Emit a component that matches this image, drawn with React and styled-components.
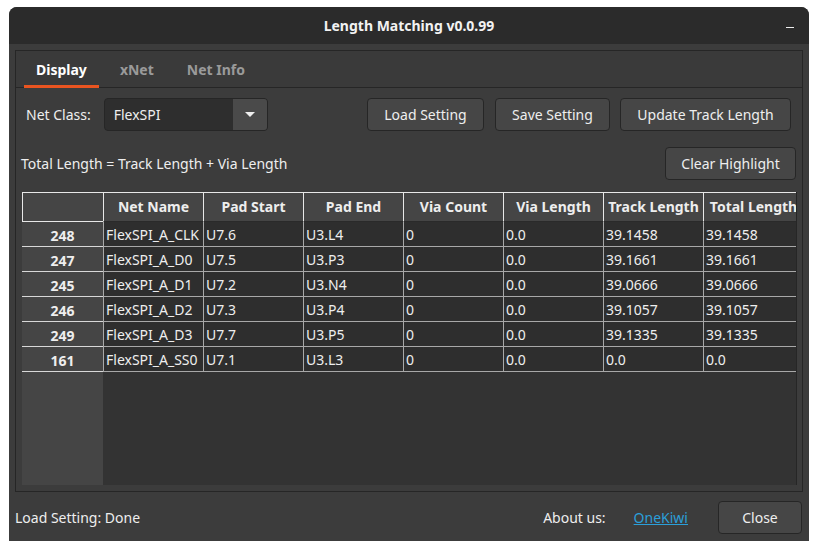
import React from "react"
import styled, { createGlobalStyle } from 'styled-components';

const orange = "#e95420";
const link = "#2b9fd9";
const text = "#eeeeee";
const font = "'Noto Sans', 'DejaVu Sans', sans-serif";

const GlobalStyle = createGlobalStyle`
  body {
    margin: 0;
    background: #ffffff;
    font-family: ${font};
  }
`;

const Window = styled.div`
  margin: 7px 0 0 9px;
  width: 800px;
  height: 534px;
  border-radius: 8px 8px 0 0;
  overflow: hidden;
  background: #3c3c3c;
  display: flex;
  flex-direction: column;
  color: ${text};
  font-size: 14px;
`;

const TitleBar = styled.div`
  height: 37px;
  flex: none;
  background: #2b2b2b;
  display: grid;
  grid-template-columns: 1fr auto 1fr;
  align-items: center;
  font-weight: bold;
  font-size: 14px;
  color: #f2f2f2;
`;

const Minimize = styled.span`
  justify-self: end;
  width: 8px;
  height: 1.5px;
  background: #eeeeee;
  margin: 4px 15px 0 0;
`;

const Body = styled.div`
  flex: 1;
  display: flex;
  flex-direction: column;
  padding: 6px 6px 0 6px;
  min-height: 0;
`;

const TabWidget = styled.div`
  height: 440px;
  flex: none;
  display: flex;
  flex-direction: column;
  border: 1px solid #262626;
  background: #3a3a3a;
`;

const TabBar = styled.div`
  height: 36px;
  flex: none;
  display: flex;
  gap: 9px;
  padding-left: 8px;
  border-bottom: 1px solid #262626;
`;

const Tab = styled.div`
  padding: 0 12px;
  display: flex;
  align-items: center;
  font-weight: bold;
  color: ${p => p.$active ? "#ffffff" : "#9a9a9a"};
  box-shadow: ${p => p.$active ? `inset 0 -3px 0 ${orange}` : "none"};
  margin-bottom: -1px;
  padding-bottom: 1px;
`;

const Panel = styled.div`
  flex: 1;
  background: #3c3c3c;
  padding: 10px 5px 4px 6px;
  display: flex;
  flex-direction: column;
  min-height: 0;
`;

const Toolbar = styled.div`
  display: flex;
  align-items: center;
  height: 33px;
  padding-left: 4px;
`;

const Label = styled.span`
  margin-right: 13px;
`;

const Combo = styled.div`
  width: 164px;
  height: 33px;
  box-sizing: border-box;
  display: flex;
  border: 1px solid #262626;
  border-radius: 4px;
  overflow: hidden;
  background: #2e2e2e;
`;

const ComboText = styled.div`
  flex: 1;
  display: flex;
  align-items: center;
  padding-left: 9px;
`;

const ComboArrow = styled.div`
  width: 34px;
  background: #4a4a4a;
  display: flex;
  align-items: center;
  justify-content: center;

  &::after {
    content: "";
    border-left: 5px solid transparent;
    border-right: 5px solid transparent;
    border-top: 5px solid #eeeeee;
  }
`;

const Spacer = styled.div`
  flex: 1;
`;

const Button = styled.button`
  height: 33px;
  width: ${p => p.$w}px;
  margin-left: ${p => p.$ml || 0}px;
  box-sizing: border-box;
  background: #464646;
  border: 1px solid #262626;
  border-radius: 4px;
  color: ${text};
  font-family: ${font};
  font-size: 14px;
  padding: 0;
`;

const InfoRow = styled.div`
  display: flex;
  align-items: center;
  height: 33px;
  margin-top: 16px;
  padding-right: 1px;
`;

const Formula = styled.span`
  margin-left: -1px;
`;

const Table = styled.div`
  margin-top: 12px;
  height: 293px;
  width: 775px;
  display: flex;
  overflow: hidden;
  background: #333333;
  border-right: 1px solid #262626;
  box-sizing: border-box;
`;

const RowHeaders = styled.div`
  width: 81px;
  flex: none;
  background: #454545;
  display: flex;
  flex-direction: column;
`;

const Corner = styled.div`
  height: 30px;
  box-sizing: border-box;
  border: 1px solid #e8e8e8;
  border-right: none;
`;

const RowNum = styled.div`
  height: 25px;
  box-sizing: border-box;
  border-bottom: 1px solid #d8d8d8;
  display: flex;
  align-items: center;
  justify-content: center;
  font-weight: bold;
  padding-top: 2px;
`;

const Grid = styled.div`
  display: grid;
  grid-template-columns: repeat(7, 100px);
  grid-auto-rows: 25px;
  grid-template-rows: 30px;
  align-content: start;
`;

const HeadCell = styled.div`
  background: #454545;
  box-sizing: border-box;
  border-top: 1px solid #e8e8e8;
  border-left: 1px solid #e8e8e8;
  border-bottom: 1px solid #2a2a2a;
  display: flex;
  align-items: center;
  justify-content: center;
  font-weight: bold;
  white-space: nowrap;
  overflow: hidden;
  padding-bottom: 1px;
`;

const Cell = styled.div`
  background: #2e2e2e;
  box-sizing: border-box;
  border-left: 1px solid #a8a8a8;
  border-bottom: 1px solid #a8a8a8;
  display: flex;
  align-items: center;
  padding-left: 2px;
  white-space: nowrap;
  overflow: hidden;
`;

const Footer = styled.div`
  flex: 1;
  display: flex;
  align-items: center;
  padding: 1px 1px 0 0;
`;

const LinkText = styled.a`
  color: ${link};
  text-decoration: underline;
  margin: 0 30px 0 28px;
`;

const columns = ["Net Name", "Pad Start", "Pad End", "Via Count", "Via Length", "Track Length", "Total Length"];

const rows = [
  ["248", "FlexSPI_A_CLK", "U7.6", "U3.L4", "0", "0.0", "39.1458", "39.1458"],
  ["247", "FlexSPI_A_D0", "U7.5", "U3.P3", "0", "0.0", "39.1661", "39.1661"],
  ["245", "FlexSPI_A_D1", "U7.2", "U3.N4", "0", "0.0", "39.0666", "39.0666"],
  ["246", "FlexSPI_A_D2", "U7.3", "U3.P4", "0", "0.0", "39.1057", "39.1057"],
  ["249", "FlexSPI_A_D3", "U7.7", "U3.P5", "0", "0.0", "39.1335", "39.1335"],
  ["161", "FlexSPI_A_SS0", "U7.1", "U3.L3", "0", "0.0", "0.0", "0.0"],
];

const App = () => (
  <>
    <GlobalStyle />
    <Window>
      <TitleBar>
        <span />
        <span>Length Matching v0.0.99</span>
        <Minimize />
      </TitleBar>

      <Body>
        <TabWidget>
          <TabBar>
            <Tab $active>Display</Tab>
            <Tab>xNet</Tab>
            <Tab>Net Info</Tab>
          </TabBar>

          <Panel>
            <Toolbar>
              <Label>Net Class:</Label>
              <Combo>
                <ComboText>FlexSPI</ComboText>
                <ComboArrow />
              </Combo>
              <Spacer />
              <Button $w={117}>Load Setting</Button>
              <Button $w={115} $ml={11}>Save Setting</Button>
              <Button $w={171} $ml={10}>Update Track Length</Button>
              <span style={{ width: 6 }} />
            </Toolbar>

            <InfoRow>
              <Formula>Total Length = Track Length + Via Length</Formula>
              <Spacer />
              <Button $w={131}>Clear Highlight</Button>
            </InfoRow>

            <Table>
              <RowHeaders>
                <Corner />
                {rows.map(r => <RowNum key={r[0]}>{r[0]}</RowNum>)}
              </RowHeaders>
              <Grid>
                {columns.map(c => <HeadCell key={c}>{c}</HeadCell>)}
                {rows.map(r => r.slice(1).map((v, i) => <Cell key={r[0] + i}>{v}</Cell>))}
              </Grid>
            </Table>
          </Panel>
        </TabWidget>

        <Footer>
          <span>Load Setting: Done</span>
          <Spacer />
          <span>About us:</span>
          <LinkText href="#">OneKiwi</LinkText>
          <Button $w={84}>Close</Button>
        </Footer>
      </Body>
    </Window>
  </>
)

export default App;
